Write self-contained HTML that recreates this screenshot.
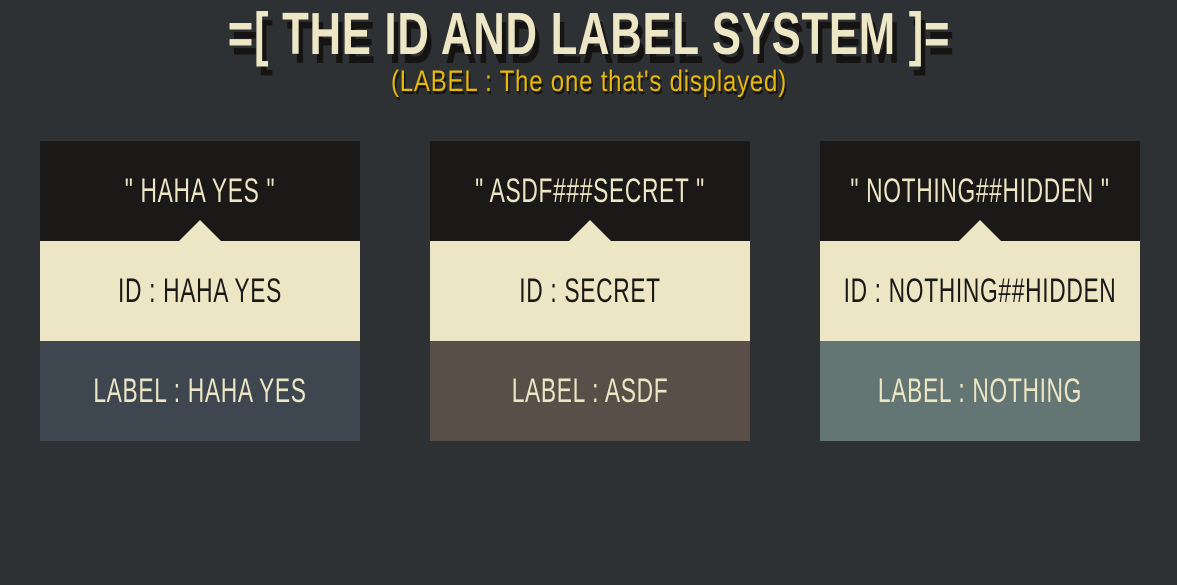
<!DOCTYPE html>
<html><head><style>
html,body{margin:0;padding:0}
body{width:1177px;height:585px;background:#2e3133;position:relative;overflow:hidden;font-family:"Liberation Sans",sans-serif}
.c{position:absolute;left:0;width:100%;height:60px;white-space:nowrap}
.c span{position:absolute;left:50%;top:0;transform:translateX(-50%) scaleX(var(--s))}
.title{top:4px;font-size:59px;font-weight:bold;color:#eee7c6;line-height:60px}
.title span{--s:0.74;text-shadow:6px 9px 0 #151413;letter-spacing:1px}
.sub{top:64px;font-size:30px;color:#e9b90a;line-height:36px}
.sub span{--s:0.8;letter-spacing:1px;text-shadow:2px 3px 0 #151413}
.card{position:absolute;top:141px;width:320px;height:300px}
.card div{position:relative;height:100px;line-height:100px;font-size:34px;white-space:nowrap}
.card div span{position:absolute;left:50%;top:0;letter-spacing:1px;transform:translateX(-50%) scaleX(0.67)}
.t{background:#1a1917;color:#ede6c5}
.m{background:#ede6c5;color:#1a1917}
.b{color:#ede6c5}
.arrow{position:absolute;left:139px;top:79px;width:0;height:0;border-left:21px solid transparent;border-right:21px solid transparent;border-bottom:21px solid #ede6c5}
</style></head><body>
<div class="c title"><span>=[ THE ID AND LABEL SYSTEM ]=</span></div>
<div class="c sub"><span>(LABEL : The one that's displayed)</span></div>

<div class="card" style="left:40px">
<div class="t"><span>" HAHA YES "</span><i class="arrow"></i></div>
<div class="m"><span>ID : HAHA YES</span></div>
<div class="b" style="background:#3e4750"><span>LABEL : HAHA YES</span></div>
</div>
<div class="card" style="left:430px">
<div class="t"><span>" ASDF###SECRET "</span><i class="arrow"></i></div>
<div class="m"><span>ID : SECRET</span></div>
<div class="b" style="background:#5a4e48"><span>LABEL : ASDF</span></div>
</div>
<div class="card" style="left:820px">
<div class="t"><span>" NOTHING##HIDDEN "</span><i class="arrow"></i></div>
<div class="m"><span>ID : NOTHING##HIDDEN</span></div>
<div class="b" style="background:#637673"><span>LABEL : NOTHING</span></div>
</div>
</body></html>
